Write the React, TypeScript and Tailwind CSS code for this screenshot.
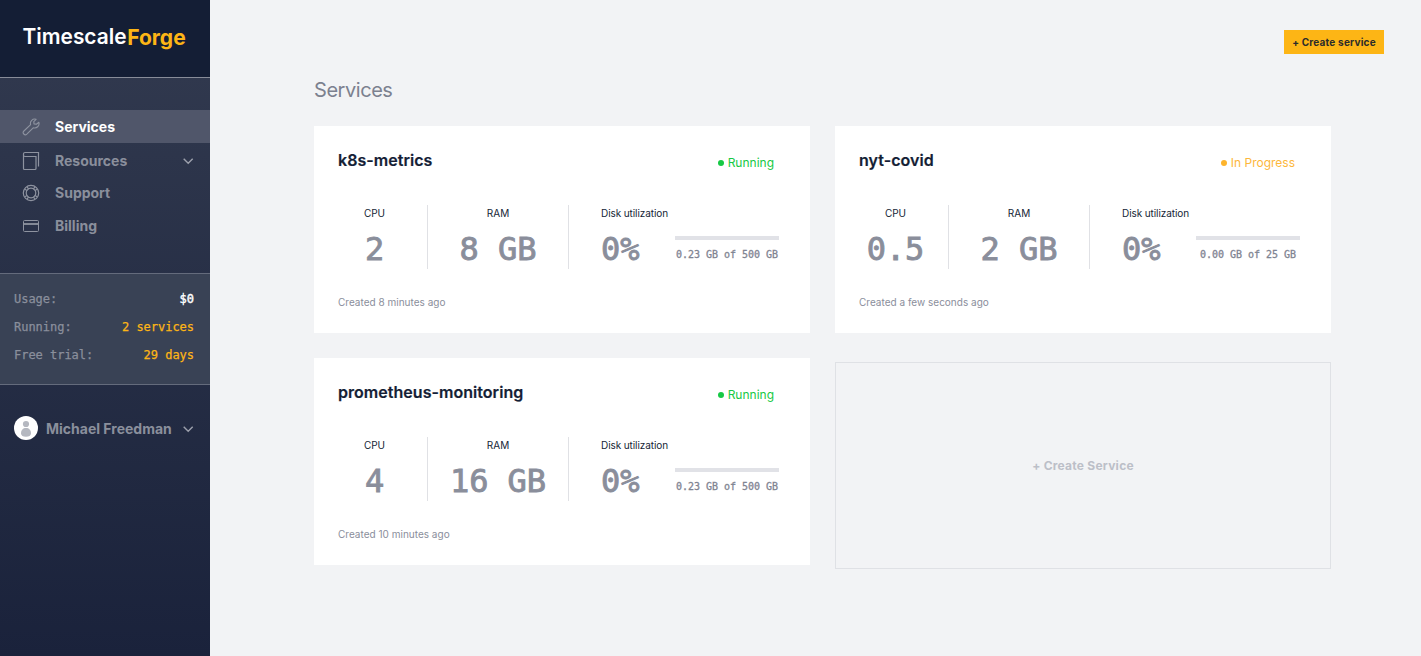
import React from "react";

const mono = "font-['DejaVu_Sans_Mono',monospace]";

type Service = {
  name: string;
  status: "Running" | "In Progress";
  cpu: string;
  ram: string;
  disk: string;
  created: string;
};

const services: Service[] = [
  { name: "k8s-metrics", status: "Running", cpu: "2", ram: "8 GB", disk: "0.23 GB of 500 GB", created: "Created 8 minutes ago" },
  { name: "nyt-covid", status: "In Progress", cpu: "0.5", ram: "2 GB", disk: "0.00 GB of 25 GB", created: "Created a few seconds ago" },
  { name: "prometheus-monitoring", status: "Running", cpu: "4", ram: "16 GB", disk: "0.23 GB of 500 GB", created: "Created 10 minutes ago" },
];

function WrenchIcon() {
  return (
    <svg width="18" height="18" viewBox="0 0 18 18" fill="none" stroke="currentColor" strokeWidth="1.1" strokeLinejoin="round">
      <path d="M14.1 1.300a4.300 4.300 0 0 0-5.500 5.300L1.900 13a2.100 2.100 0 0 0 2.900 3.100L11.200 9.800a4.500 4.500 0 0 0 5.700-5.500L14.400 6.300 12 5.900 11.800 3.600z" />
    </svg>
  );
}

function ResourcesIcon() {
  return (
    <svg width="18" height="20" viewBox="0 0 18 20" fill="none" stroke="currentColor" strokeWidth="1.2">
      <path d="M16.500 15.500V1.500H3A1.500 1.500 0 0 0 1.500 3v14.500a1 1 0 0 0 1 1h10.500a1 1 0 0 0 1-1V5.500H3A1.500 1.500 0 0 1 1.500 4" />
    </svg>
  );
}

function SupportIcon() {
  return (
    <svg width="18" height="18" viewBox="0 0 18 18" fill="none" stroke="currentColor" strokeWidth="1.200">
      <circle cx="9" cy="9" r="7.700" />
      <circle cx="9" cy="9" r="4.800" />
      <path d="M2.700 5.200 5.200 6.500M5.200 2.700 6.500 5.200M12.800 2.700 11.500 5.200M15.300 5.200 12.800 6.500M2.700 12.800 5.200 11.500M5.200 15.300 6.500 12.800M12.800 15.300 11.500 12.800M15.300 12.800 12.800 11.500" />
    </svg>
  );
}

function BillingIcon() {
  return (
    <svg width="18" height="14" viewBox="0 0 18 14" fill="none" stroke="currentColor">
      <rect x="1.500" y="1.500" width="15" height="11" rx="1" />
      <path d="M1 5h16" strokeWidth="1.800" />
    </svg>
  );
}

function Chevron() {
  return (
    <svg width="12" height="8" viewBox="0 0 12 8" fill="none" stroke="#9ca0ac" strokeWidth="1.400">
      <path d="M1.700 1.700 6.200 6.300l4.500-4.600" />
    </svg>
  );
}

function NavItem({ label, icon, className, chevron }: { label: string; icon: React.ReactNode; className: string; chevron?: boolean }) {
  return (
    <a className={`flex items-center pl-[22px] pr-4 text-sm font-bold ${className}`}>
      <span className="flex w-[33px] shrink-0 items-center text-[#8e93a0]">{icon}</span>
      <span className="flex-1">{label}</span>
      {chevron && <Chevron />}
    </a>
  );
}

function UsageRow({ label, value, color }: { label: string; value: string; color: string }) {
  return (
    <div className="flex h-7 items-center justify-between">
      <span className="text-[#8a8f9c] [-webkit-text-stroke:0.25px_#8a8f9c]">{label}</span>
      <span className={color}>{value}</span>
    </div>
  );
}

function Sidebar() {
  return (
    <aside className="flex w-[210px] shrink-0 flex-col bg-linear-to-b from-[#333b50] to-[#1a223b]">
      <div className="flex h-[78px] items-start border-b border-[#888c99] bg-[#141e35] pl-[22px] pt-[17px]">
        <svg width="176" height="40" viewBox="0 0 176 40" fontFamily="Inter, sans-serif" fontSize="21.500">
          <text x="0.500" y="27" fontWeight="600" fill="#fff" textLength="104" lengthAdjust="spacingAndGlyphs">Timescale</text>
          <text x="105.200" y="28" fontWeight="700" fill="#fdb515" textLength="58.500" lengthAdjust="spacingAndGlyphs">Forge</text>
        </svg>
      </div>
      <nav className="flex h-[195px] flex-col pt-8 text-[#8a8f9c]">
        <NavItem label="Services" icon={<WrenchIcon />} className="h-[33px] bg-[#50566a] text-white" />
        <NavItem label="Resources" icon={<ResourcesIcon />} className="h-[34px] pt-px" chevron />
        <NavItem label="Support" icon={<SupportIcon />} className="h-8" />
        <NavItem label="Billing" icon={<BillingIcon />} className="h-[33px]" />
      </nav>
      <section className={`h-[112px] border-y border-[#646b7c] bg-[#394255] pl-3.5 pr-4 pt-[11px] text-[12px] tracking-[-0.024px] ${mono}`}>
        <UsageRow label="Usage:" value="$0" color="text-white [-webkit-text-stroke:0.4px_#fff]" />
        <UsageRow label="Running:" value="2 services" color="text-[#fdb515] [-webkit-text-stroke:0.25px_#fdb515]" />
        <UsageRow label="Free trial:" value="29 days" color="text-[#fdb515] [-webkit-text-stroke:0.25px_#fdb515]" />
      </section>
      <div className="mt-[31px] flex h-6 items-center pl-3.5 pr-4">
        <svg width="24" height="24" viewBox="0 0 24 24">
          <circle cx="12" cy="12" r="12" fill="#fff" />
          <circle cx="12" cy="8" r="3.100" fill="#b5b8c0" />
          <path d="M7 17.500c0-3.600 2-5.500 5-5.500s5 1.900 5 5.500c0 2-2 3.300-5 3.300s-5-1.300-5-3.300z" fill="#b5b8c0" />
        </svg>
        <span className="ml-2 mt-0.5 flex-1 whitespace-nowrap text-sm font-bold text-[#8a8f9c]">Michael Freedman</span>
        <span className="pt-px">
          <Chevron />
        </span>
      </div>
    </aside>
  );
}

function Stat({ label, value, className }: { label: string; value: string; className: string }) {
  return (
    <div className={`flex flex-col items-center border-r border-[#e0e1e5] ${className}`}>
      <span className="text-[10px] leading-4">{label}</span>
      <BigValue value={value} />
    </div>
  );
}

function BigValue({ value }: { value: string }) {
  return (
    <span className={`mt-2 whitespace-pre text-[32px] leading-10 tracking-[-0.065px] text-[#8a8e9b] [-webkit-text-stroke:0.9px_#8a8e9b] ${mono}`}>{value}</span>
  );
}

function ServiceCard({ service }: { service: Service }) {
  const running = service.status === "Running";
  return (
    <article className="h-[207px] bg-white pl-6 text-[#141e35]">
      <header className="flex items-start justify-between pr-9 pt-[22px]">
        <h2 className="text-base font-semibold tracking-[0.04px] [-webkit-text-stroke:0.2px_#141e35]">{service.name}</h2>
        <span className={`flex items-center gap-1 pt-[5px] text-xs leading-5 ${running ? "text-[#16c944]" : "text-[#fdb73b]"}`}>
          <i className={`size-1.5 rounded-full ${running ? "bg-[#16c944]" : "bg-[#fdb42d]"}`} />
          {service.status}
        </span>
      </header>
      <div className="mt-8 flex h-16">
        <Stat label="CPU" value={service.cpu} className="w-[90px] pr-4" />
        <Stat label="RAM" value={service.ram} className="w-[141px]" />
        <div className="flex pl-8">
          <div className="flex w-[74px] flex-col whitespace-nowrap">
            <span className="text-[10px] leading-4 tracking-[-0.09px]">Disk utilization</span>
            <BigValue value="0%" />
          </div>
          <div className="flex w-[104px] flex-col items-center pt-[31px]">
            <div className="h-1 w-full bg-[#e1e2e7]" />
            <span className={`mt-[7px] whitespace-nowrap text-[10px] leading-4 tracking-[-0.02px] text-[#7f8492] [-webkit-text-stroke:0.3px_#7f8492] ${mono}`}>{service.disk}</span>
          </div>
        </div>
      </div>
      <p className="mt-[25px] text-[10px] leading-4 tracking-[0.01px] text-[#8a8e9b]">{service.created}</p>
    </article>
  );
}

export default function App() {
  return (
    <div className="flex h-screen w-full overflow-hidden bg-[#f2f3f5] font-['Inter',sans-serif]">
      <Sidebar />
      <main className="flex flex-1 flex-col pl-[104px] pt-[30px]">
        <div className="flex justify-end pr-[37px]">
          <button className="h-6 w-[100px] whitespace-nowrap bg-[#fdb515] text-[10px] font-bold tracking-[0.2px] text-[#2b2b2b]">+ Create service</button>
        </div>
        <h1 className="mt-[22px] text-xl leading-7 tracking-[-0.45px] text-[#7c818f]">Services</h1>
        <div className="mt-[22px] grid grid-cols-[496px_496px] gap-[25px]">
          {services.map((s) => (
            <ServiceCard key={s.name} service={s} />
          ))}
          <button className="mt-1 h-[207px] border border-[#dfe1e5] text-xs font-bold tracking-[0.25px] text-[#bcbfc8]">+ Create Service</button>
        </div>
      </main>
    </div>
  );
}
